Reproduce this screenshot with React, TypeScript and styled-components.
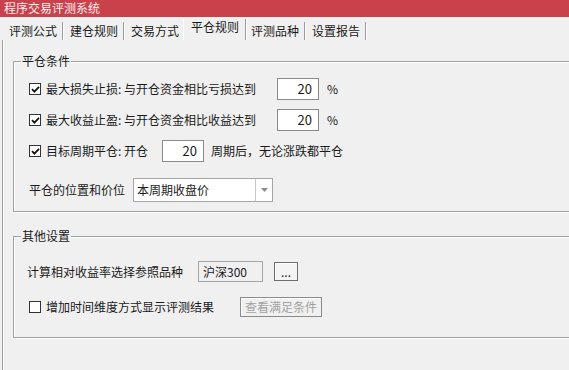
import React from 'react';
import styled, { createGlobalStyle } from 'styled-components';

const Global = createGlobalStyle`
  html, body { margin: 0; padding: 0; background: #f0f0f0; }
  body {
    font-family: "Noto Sans CJK SC", "Microsoft YaHei", sans-serif;
    font-size: 12px;
    color: #1a1a1a;
  }
  * { box-sizing: border-box; }
`;

const Window = styled.div`
  width: 569px;
  height: 370px;
  overflow: hidden;
  background: #f0f0f0;
  display: flex;
  flex-direction: column;
`;

const TitleBar = styled.div`
  height: 17px;
  flex: none;
  background: #c9424b;
  color: #fbecec;
  padding-left: 4px;
  line-height: 16px;
  font-size: 12px;
`;

const TabStrip = styled.div`
  height: 23px;
  flex: none;
  display: flex;
  align-items: flex-end;
  padding-left: 2px;
`;

const Tab = styled.div<{ $active?: boolean }>`
  height: ${(p) => (p.$active ? 21 : 18)}px;
  padding: ${(p) => (p.$active ? '0 6px 3px 7px' : '0 5px 0 7px')};
  margin: ${(p) => (p.$active ? '0 -2px 0 -2px' : '0')};
  line-height: ${(p) => (p.$active ? 16 : 17)}px;
  white-space: nowrap;
  border-right: 1px solid #9c9c9c;
  box-shadow: 1px 0 0 #ffffff;
  ${(p) =>
    p.$active &&
    `
    border-left: 1px solid #ffffff;
    background: #f0f0f0;
    position: relative;
    z-index: 1;
  `}
`;

const Panel = styled.div`
  flex: 1;
  margin-left: 2px;
  border-left: 1px solid #a0a0a0;
  box-shadow: inset 1px 0 0 #ffffff;
  padding-left: 10px;
  display: flex;
  flex-direction: column;
`;

const Group = styled.div<{ $top: number; $height: number; $pad: string }>`
  position: relative;
  margin-top: ${(p) => p.$top}px;
  height: ${(p) => p.$height}px;
  width: 600px;
  flex: none;
  border: 1px solid #a0a0a0;
  box-shadow: inset 1px 1px 0 #ffffff, 1px 1px 0 #ffffff;
  padding: ${(p) => p.$pad};
  display: flex;
  flex-direction: column;
`;

const Legend = styled.span`
  position: absolute;
  top: -9px;
  left: 7px;
  padding: 0 1px;
  background: #f0f0f0;
  line-height: 16px;
`;

const Row = styled.div<{ $h: number; $mt?: number; $ml?: number }>`
  display: flex;
  align-items: center;
  height: ${(p) => p.$h}px;
  margin-top: ${(p) => p.$mt ?? 0}px;
  margin-left: ${(p) => p.$ml ?? 0}px;
  white-space: nowrap;
  line-height: 16px;
`;

const Box = styled.span`
  width: 12px;
  height: 12px;
  flex: none;
  border: 1px solid #333333;
  background: #ffffff;
  margin-right: 5px;
  display: flex;
  align-items: center;
  justify-content: center;
`;

const Label = styled.span<{ $w?: number }>`
  width: ${(p) => (p.$w ? `${p.$w}px` : 'auto')};
  flex: none;
`;

const NumBox = styled.div`
  width: 42px;
  height: 22px;
  flex: none;
  background: #ffffff;
  border: 1px solid #8a8a8a;
  text-align: right;
  padding-right: 6px;
  line-height: 20px;
  font-size: 13px;
`;

const Unit = styled.span<{ $ml: number }>`
  margin-left: ${(p) => p.$ml}px;
`;

const Combo = styled.div`
  width: 140px;
  height: 24px;
  flex: none;
  background: #ffffff;
  border: 1px solid #a6a6a6;
  display: flex;
`;

const ComboText = styled.span`
  flex: 1;
  padding-left: 3px;
  line-height: 22px;
`;

const ComboArrow = styled.span`
  width: 17px;
  border-left: 1px solid #c8c8c8;
  display: flex;
  align-items: center;
  justify-content: center;
`;

const ReadField = styled.div`
  width: 65px;
  height: 21px;
  flex: none;
  border: 1px solid #a6a6a6;
  background: #f0f0f0;
  padding-left: 4px;
  line-height: 19px;
`;

const Button = styled.div<{ $w: number; $h: number; $ml: number; $disabled?: boolean }>`
  width: ${(p) => p.$w}px;
  height: ${(p) => p.$h}px;
  margin-left: ${(p) => p.$ml}px;
  flex: none;
  border: 1px solid ${(p) => (p.$disabled ? '#8a8a8a' : '#6e6e6e')};
  background: ${(p) => (p.$disabled ? '#f0f0f0' : '#f4f4f4')};
  box-shadow: inset 1px 1px 0 #ffffff;
  color: ${(p) => (p.$disabled ? '#a2a2a2' : '#1a1a1a')};
  text-align: center;
  line-height: ${(p) => p.$h - 2}px;
`;

const Check = () => (
  <svg width="9" height="9" viewBox="0 0 9 9">
    <path d="M1 4.2 L3.4 6.6 L8 1.8" fill="none" stroke="#111" strokeWidth="1.8" />
  </svg>
);

const CheckBox = ({ checked }: { checked?: boolean }) => <Box>{checked && <Check />}</Box>;

const tabs = ['评测公式', '建仓规则', '交易方式', '平仓规则', '评测品种', '设置报告'];

export default function App() {
  return (
    <Window>
      <Global />
      <TitleBar>程序交易评测系统</TitleBar>
      <TabStrip>
        {tabs.map((t, i) => (
          <Tab key={t} $active={i === 3}>
            {t}
          </Tab>
        ))}
      </TabStrip>
      <Panel>
        <Group $top={21} $height={151} $pad="16px 0 0 15px">
          <Legend>平仓条件</Legend>
          <Row $h={22}>
            <CheckBox checked />
            <Label $w={231}>最大损失止损: 与开仓资金相比亏损达到</Label>
            <NumBox>20</NumBox>
            <Unit $ml={8}>%</Unit>
          </Row>
          <Row $h={22} $mt={9}>
            <CheckBox checked />
            <Label $w={231}>最大收益止盈: 与开仓资金相比收益达到</Label>
            <NumBox>20</NumBox>
            <Unit $ml={8}>%</Unit>
          </Row>
          <Row $h={22} $mt={9}>
            <CheckBox checked />
            <Label $w={116}>目标周期平仓: 开仓</Label>
            <NumBox>20</NumBox>
            <Unit $ml={7}>周期后，无论涨跌都平仓</Unit>
          </Row>
          <Row $h={24} $mt={16}>
            <Label $w={104}>平仓的位置和价位</Label>
            <Combo>
              <ComboText>本周期收盘价</ComboText>
              <ComboArrow>
                <svg width="7" height="4" viewBox="0 0 7 4">
                  <path d="M0 0 H7 L3.5 4 Z" fill="#8a8a8a" />
                </svg>
              </ComboArrow>
            </Combo>
          </Row>
        </Group>
        <Group $top={24} $height={102} $pad="24px 0 0 13px">
          <Legend>其他设置</Legend>
          <Row $h={21}>
            <Label $w={171}>计算相对收益率选择参照品种</Label>
            <ReadField>沪深300</ReadField>
            <Button $w={24} $h={19} $ml={11}>...</Button>
          </Row>
          <Row $h={20} $mt={15} $ml={2}>
            <CheckBox />
            <Label $w={194}>增加时间维度方式显示评测结果</Label>
            <Button $w={82} $h={20} $ml={0} $disabled>查看满足条件</Button>
          </Row>
        </Group>
      </Panel>
    </Window>
  );
}
